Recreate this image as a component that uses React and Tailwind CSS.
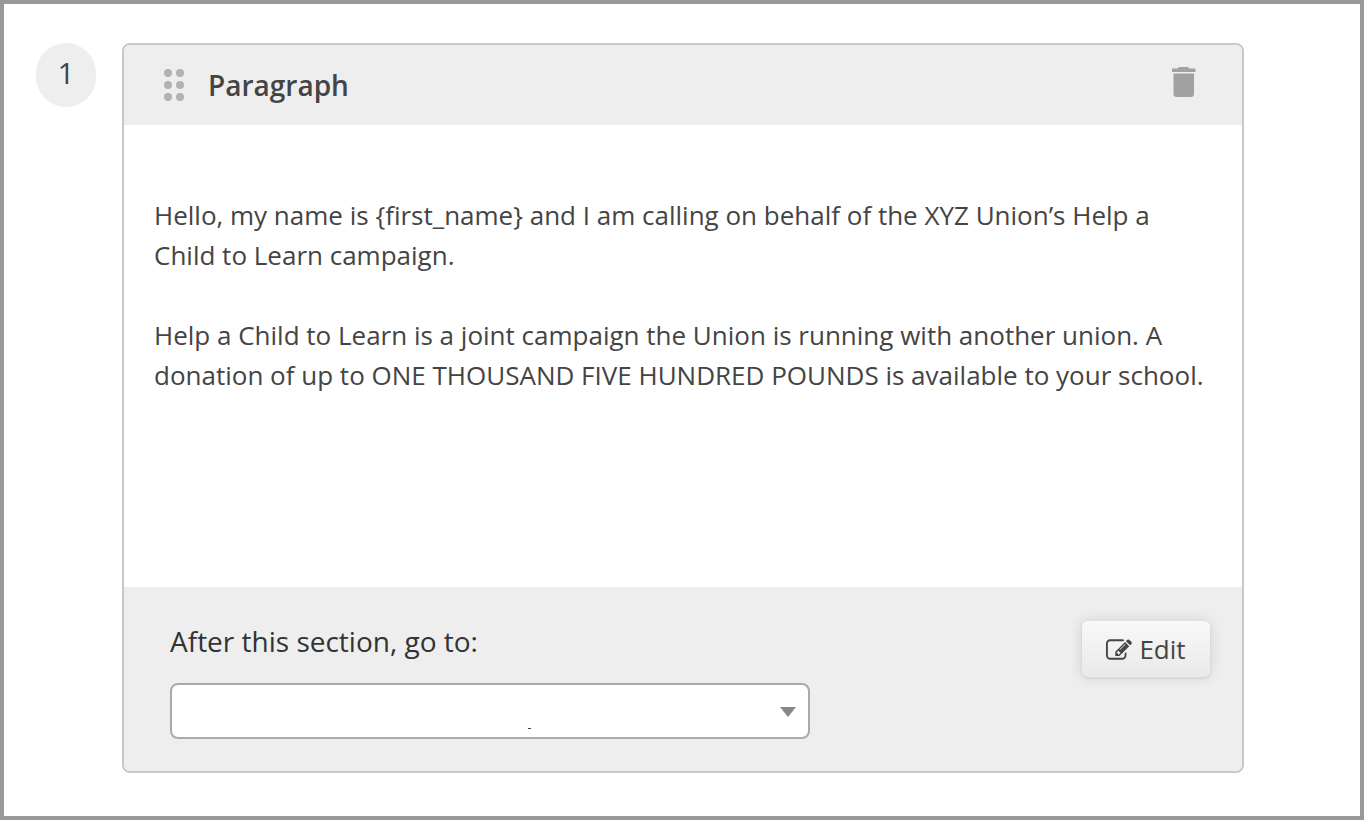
const dots = [0, 1, 2, 3, 4, 5];

const greeting =
  "Hello, my name is {first_name} and I am calling on behalf of the XYZ Union’s Help a Child to Learn campaign.";
const details =
  "Help a Child to Learn is a joint campaign the Union is running with another union. A donation of up to ONE THOUSAND FIVE HUNDRED POUNDS is available to your school.";

function TrashIcon() {
  return (
    <svg width="24" height="30" viewBox="0 0 24 30" fill="#a1a1a1">
      <path d="M7 0h9l1.500 1.500H23.500V5H0V1.500H5.500zM1.500 6.500h20.500v20.500a3 3 0 0 1-3 3h-14.500a3 3 0 0 1-3-3z" />
    </svg>
  );
}

function EditIcon() {
  return (
    <svg width="26" height="21" viewBox="0 112 1792 1440" fill="currentColor">
      <path d="M888 1184l116-116-152-152-116 116v56h96v96h56zm440-720q-16-16-33 1l-350 350q-17 17-1 33t33-1l350-350q17-17 1-33zm80 594v190q0 119-84.500 203.500t-203.500 84.500h-832q-119 0-203.500-84.500t-84.500-203.500v-832q0-119 84.500-203.500t203.500-84.500h832q63 0 117 25 15 7 18 23 3 17-9 29l-49 49q-14 14-32 8-23-6-45-6h-832q-66 0-113 47t-47 113v832q0 66 47 113t113 47h832q66 0 113-47t47-113v-126q0-13 9-22l64-64q15-15 35-7t20 29zm-96-738l288 288-672 672h-288v-288zm444 132l-92 92-288-288 92-92q28-28 68-28t68 28l152 152q28 28 28 68t-28 68z" />
    </svg>
  );
}

export default function App() {
  return (
    <main className="flex min-h-screen items-start border-4 border-[#999999] bg-white pt-[39px] pr-[116px] pb-10 pl-8 font-['Open_Sans',sans-serif] text-[#444444]">
      <div className="h-16 w-[60px] shrink-0 rounded-full bg-[#eeeeee] text-center text-[30px] leading-[60px]">1</div>
      <section className="ml-[26px] flex min-w-0 flex-1 flex-col overflow-hidden rounded-lg border-2 border-[#c8c8c8]">
        <header className="flex h-20 items-center bg-[#eeeeee] pr-[46px] pl-10">
          <button type="button" aria-label="Move section" className="grid grid-cols-2 gap-1">
            {dots.map((d) => (
              <span key={d} className="size-2 rounded-full bg-[#b2b2b2]" />
            ))}
          </button>
          <h2 className="ml-6 text-[28px] font-semibold">Paragraph</h2>
          <button type="button" aria-label="Delete section" className="mb-1.5 ml-auto">
            <TrashIcon />
          </button>
        </header>
        <div className="min-h-[462px] px-[30px] pt-[70px] pb-10 text-[26px] leading-10">
          <p>{greeting}</p>
          <p className="mt-10">{details}</p>
        </div>
        <footer className="flex items-start justify-between bg-[#eeeeee] py-8 pr-8 pl-[46px]">
          <div className="w-[640px]">
            <label htmlFor="next" className="block text-[28px] leading-[44px] text-[#333333]">After this section, go to:</label>
            <div className="relative mt-5">
              <select id="next" className="block h-14 w-full appearance-none rounded-lg border-2 border-[#aaaaaa] bg-white px-4 text-[26px]">
                <option></option>
              </select>
              <svg className="pointer-events-none absolute top-6 right-3.5" width="16" height="10" viewBox="0 0 16 10" fill="#888888">
                <path d="M0 0h16L8 10z" />
              </svg>
              <span aria-hidden="true" className="pointer-events-none absolute bottom-2.5 left-[358px] h-px w-[3px] bg-[#444444]" />
            </div>
          </div>
          <button type="button" className="mt-0.5 flex h-14 w-32 items-center justify-center gap-[7px] rounded-md bg-linear-to-b from-[#f9f9f9] to-[#e9e9e9] text-[26px] shadow-[0_1px_1px_1px_#dadada,0_0_14px_rgba(0,0,0,0.13)]">
            <EditIcon />
            Edit
          </button>
        </footer>
      </section>
    </main>
  );
}
